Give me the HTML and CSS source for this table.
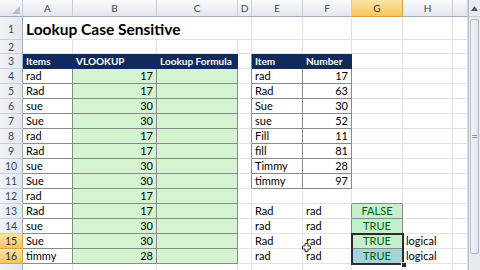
FILE: index.html
```html
<!DOCTYPE html>
<html>
<head>
<meta charset="utf-8">
<link rel="stylesheet" href="styles.css">
</head>
<body>
<div class="app">
  <div class="sheet">
    <!-- column headers -->
    <div class="ch corner"><svg width="8" height="8" viewBox="0 0 8 8"><polygon points="8,0 8,8 0,8" fill="#b7c1cd"/></svg></div>
    <div class="ch">A</div><div class="ch">B</div><div class="ch">C</div><div class="ch">D</div><div class="ch">E</div><div class="ch">F</div><div class="ch hs">G</div><div class="ch">H</div><div class="ch"></div>

    <!-- row 1 -->
    <div class="rh r1">1</div>
    <div class="c title">Lookup Case Sensitive</div>
    <div class="c"></div><div class="c"></div><div class="c"></div><div class="c"></div><div class="c"></div><div class="c"></div>

    <!-- row 2 -->
    <div class="rh">2</div>
    <div class="c"></div><div class="c"></div><div class="c"></div><div class="c"></div><div class="c"></div><div class="c"></div><div class="c"></div><div class="c"></div><div class="c"></div>

    <!-- row 3 -->
    <div class="rh">3</div>
    <div class="c th">Items</div><div class="c th">VLOOKUP</div><div class="c th">Lookup Formula</div><div class="c rb"></div><div class="c th">Item</div><div class="c th">Number</div><div class="c"></div><div class="c"></div><div class="c"></div>

    <!-- row 4 -->
    <div class="rh">4</div>
    <div class="c bd">rad</div><div class="c bd gr num">17</div><div class="c bd gr"></div><div class="c rb"></div><div class="c bd">rad</div><div class="c bd num">17</div><div class="c"></div><div class="c"></div><div class="c"></div>

    <!-- row 5 -->
    <div class="rh">5</div>
    <div class="c bd">Rad</div><div class="c bd gr num">17</div><div class="c bd gr"></div><div class="c rb"></div><div class="c bd">Rad</div><div class="c bd num">63</div><div class="c"></div><div class="c"></div><div class="c"></div>

    <!-- row 6 -->
    <div class="rh">6</div>
    <div class="c bd">sue</div><div class="c bd gr num">30</div><div class="c bd gr"></div><div class="c rb"></div><div class="c bd">Sue</div><div class="c bd num">30</div><div class="c"></div><div class="c"></div><div class="c"></div>

    <!-- row 7 -->
    <div class="rh">7</div>
    <div class="c bd">Sue</div><div class="c bd gr num">30</div><div class="c bd gr"></div><div class="c rb"></div><div class="c bd">sue</div><div class="c bd num">52</div><div class="c"></div><div class="c"></div><div class="c"></div>

    <!-- row 8 -->
    <div class="rh">8</div>
    <div class="c bd">rad</div><div class="c bd gr num">17</div><div class="c bd gr"></div><div class="c rb"></div><div class="c bd">Fill</div><div class="c bd num">11</div><div class="c"></div><div class="c"></div><div class="c"></div>

    <!-- row 9 -->
    <div class="rh">9</div>
    <div class="c bd">Rad</div><div class="c bd gr num">17</div><div class="c bd gr"></div><div class="c rb"></div><div class="c bd">fill</div><div class="c bd num">81</div><div class="c"></div><div class="c"></div><div class="c"></div>

    <!-- row 10 -->
    <div class="rh">10</div>
    <div class="c bd">sue</div><div class="c bd gr num">30</div><div class="c bd gr"></div><div class="c rb"></div><div class="c bd">Timmy</div><div class="c bd num">28</div><div class="c"></div><div class="c"></div><div class="c"></div>

    <!-- row 11 -->
    <div class="rh">11</div>
    <div class="c bd">Sue</div><div class="c bd gr num">30</div><div class="c bd gr"></div><div class="c rb"></div><div class="c bd">timmy</div><div class="c bd num">97</div><div class="c"></div><div class="c"></div><div class="c"></div>

    <!-- row 12 -->
    <div class="rh">12</div>
    <div class="c bd">rad</div><div class="c bd gr num">17</div><div class="c bd gr"></div><div class="c"></div><div class="c"></div><div class="c"></div><div class="c bb"></div><div class="c"></div><div class="c"></div>

    <!-- row 13 -->
    <div class="rh">13</div>
    <div class="c bd">Rad</div><div class="c bd gr num">17</div><div class="c bd gr"></div><div class="c"></div><div class="c">Rad</div><div class="c rb">rad</div><div class="c bd gd">FALSE</div><div class="c"></div><div class="c"></div>

    <!-- row 14 -->
    <div class="rh">14</div>
    <div class="c bd">sue</div><div class="c bd gr num">30</div><div class="c bd gr"></div><div class="c"></div><div class="c">rad</div><div class="c rb">rad</div><div class="c bd gd">TRUE</div><div class="c"></div><div class="c"></div>

    <!-- row 15 -->
    <div class="rh hs">15</div>
    <div class="c bd">Sue</div><div class="c bd gr num">30</div><div class="c bd gr"></div><div class="c"></div><div class="c">Rad</div><div class="c rb">rad</div><div class="c bd gd">TRUE</div><div class="c">logical</div><div class="c"></div>

    <!-- row 16 -->
    <div class="rh hs">16</div>
    <div class="c bd">timmy</div><div class="c bd gr num">28</div><div class="c bd gr"></div><div class="c"></div><div class="c">rad</div><div class="c rb">rad</div><div class="c bd gd gsel">TRUE</div><div class="c">logical</div><div class="c"></div>

    <!-- row 17 (partly visible) -->
    <div class="rh"></div>
    <div class="c"></div><div class="c"></div><div class="c"></div><div class="c"></div><div class="c"></div><div class="c"></div><div class="c"></div><div class="c"></div><div class="c"></div>

    <div class="selbox"><div class="handle"></div></div>
    <svg class="cursor" width="9" height="9" viewBox="0 0 9 9"><path d="M3 0.5h3v2.5h2.5v3h-2.5v2.5h-3v-2.5h-2.5v-3h2.5z" fill="#fff" stroke="#333" stroke-width="1"/></svg>
  </div>
  <div class="vscroll">
    <div class="vs-btn"><svg width="7" height="5" viewBox="0 0 7 5"><polygon points="3.5,0 7,5 0,5" fill="#4d5a6b"/></svg></div>
    <div class="vs-thumb"><div class="grip"></div></div>
  </div>
</div>
</body>
</html>
```
FILE: styles.css
```css
* { box-sizing: border-box; }
body {
  margin: 0;
  width: 480px;
  height: 270px;
  overflow: hidden;
  background: #fff;
  font-family: Lato, "Open Sans", "Liberation Sans", sans-serif;
}
.app {
  display: flex;
  height: 270px;
  overflow: hidden;
}
.sheet {
  position: relative;
  width: 468px;
  display: grid;
  grid-template-columns: 23px 50px 84px 81px 14px 51px 49px 51px 50px 15px;
  grid-template-rows: 17px 23px 14px repeat(15, 15px);
  align-content: start;
}
.ch {
  background: linear-gradient(#f8f9fb, #e3e7ed);
  border-right: 1px solid #c7ced8;
  border-bottom: 1px solid #9eabbb;
  text-align: center;
  font-size: 10px;
  line-height: 16px;
  color: #3a475a;
}
.corner {
  display: flex;
  align-items: flex-end;
  justify-content: flex-end;
  padding: 0 2px 2px 0;
}
.rh {
  background: linear-gradient(90deg, #f1f3f6, #e4e8ee);
  border-right: 1px solid #9eabbb;
  border-bottom: 1px solid #c7ced8;
  text-align: center;
  font-size: 10.5px;
  line-height: 14px;
  color: #3a475a;
}
.r1 { line-height: 24px; }
.hs {
  background: linear-gradient(#fbe3a6, #f6c65c);
  color: #333;
  border-color: #e0a43a;
}
.c {
  border-right: 1px solid #e0e2e6;
  border-bottom: 1px solid #e0e2e6;
  font-size: 11px;
  line-height: 14px;
  padding: 0 3px;
  white-space: nowrap;
  overflow: hidden;
  color: #000;
}
.title {
  grid-column: span 3;
  font-size: 15.5px;
  font-weight: 700;
  line-height: 24px;
  border-right: none;
}
.th {
  background: #102a5c;
  color: #fff;
  font-weight: 700;
  font-size: 10px;
  border-right-color: #102a5c;
  border-bottom-color: #102a5c;
}
.bd {
  border-right-color: #8a8a8a;
  border-bottom-color: #8a8a8a;
}
.rb { border-right-color: #8a8a8a; }
.bb { border-bottom-color: #8a8a8a; }
.gr { background: #d4f3d0; }
.num { text-align: right; }
.gd {
  background: #c6efce;
  color: #006100;
  text-align: center;
}
.gsel { background: #a3d4da; }
.selbox {
  position: absolute;
  left: 351px;
  top: 233px;
  width: 53px;
  height: 32px;
  border: 2px solid #2b2b2b;
}
.handle {
  position: absolute;
  right: -5px;
  bottom: -5px;
  width: 6px;
  height: 6px;
  background: #2b2b2b;
  border: 1px solid #fff;
}
.cursor {
  position: absolute;
  left: 302px;
  top: 243px;
}
.vscroll {
  width: 12px;
  background: #e7ebf0;
  border-left: 1px solid #b4bfcc;
  display: flex;
  flex-direction: column;
}
.vs-btn {
  height: 17px;
  display: flex;
  align-items: center;
  justify-content: center;
  border-bottom: 1px solid #c9d1db;
}
.vs-thumb {
  margin: 2px 1px;
  height: 235px;
  background: linear-gradient(90deg, #f4f6f9, #dde3ea);
  border: 1px solid #b0bbc8;
  border-radius: 2px;
  display: flex;
  align-items: center;
  justify-content: center;
}
.grip {
  width: 5px;
  height: 3px;
  border-top: 1px solid #8c99a9;
  border-bottom: 1px solid #8c99a9;
}
```
